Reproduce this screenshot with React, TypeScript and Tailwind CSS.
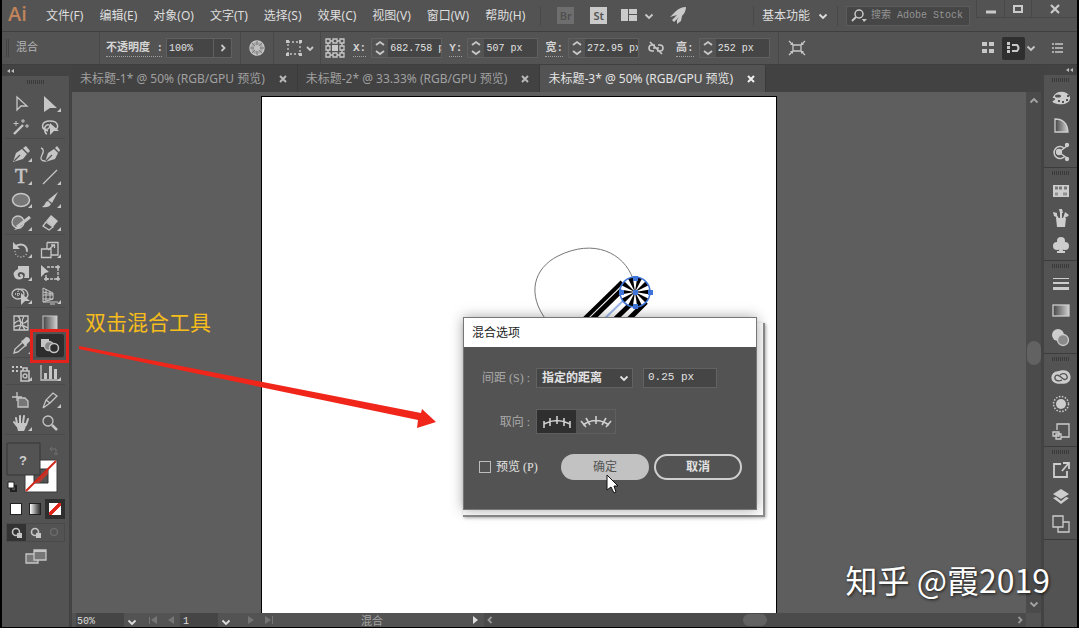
import type { ReactNode } from "react";

const ui = "font-['Noto_Sans','Noto_Sans_CJK_SC',sans-serif]";
const mono = "font-['Liberation_Mono','Noto_Sans_CJK_SC',monospace]";
const serif = "font-['Liberation_Serif','Noto_Sans_CJK_SC',serif]";

const menus = ["文件(F)", "编辑(E)", "对象(O)", "文字(T)", "选择(S)", "效果(C)", "视图(V)", "窗口(W)", "帮助(H)"];

const tabs = [
  { title: "未标题-1* @ 50% (RGB/GPU 预览)", active: false },
  { title: "未标题-2* @ 33.33% (RGB/GPU 预览)", active: false },
  { title: "未标题-3* @ 50% (RGB/GPU 预览)", active: true },
];

// Every icon is drawn around its own centre.
function Icon({ children, size = 24 }: { children: ReactNode; size?: number }) {
  const h = size / 2;
  return (
    <svg
      width={size}
      height={size}
      viewBox={`${-h} ${-h} ${size} ${size}`}
      className="shrink-0"
      fill="none"
      stroke="currentColor"
      strokeWidth="1.3"
      aria-hidden="true"
    >
      {children}
    </svg>
  );
}

function Chevron({ d = "M-3.5 -1.5L0 2L3.5 -1.5" }: { d?: string }) {
  return (
    <Icon size={12}>
      <path d={d} strokeWidth="1.8" />
    </Icon>
  );
}

function Solid({ d }: { d: string }) {
  return <path d={d} fill="currentColor" stroke="none" />;
}

const more = "M11 4V8H7Z";

type Tool = { name: string; icon: ReactNode; more?: boolean; active?: boolean };

const toolGroups: Tool[][] = [
  [
    { name: "选择工具", icon: <path d="M-4 -7L6 2H0L-4 6Z" /> },
    { name: "直接选择工具", more: true, icon: <Solid d="M-6 -8L7 4H0L-6 8Z" /> },
    {
      name: "魔棒工具",
      icon: (
        <>
          <path d="M-7 7L2 -2" strokeWidth="2.4" />
          <path d="M-5 -6V-1M-7.500 -3.500H-2.500M2 -8V-4M0 -6H4M6 -3V1M4 -1H8" strokeWidth="1" />
        </>
      ),
    },
    {
      name: "套索工具",
      icon: (
        <>
          <path d="M-2 4C-10 2 -9 -6 0 -6C9 -6 9 1 5 3M-5 0C-3 -4 2 -2 -1 1C-4 4 -6 2 -5 0Q-6 6 -3 7" strokeWidth="1.500" />
          <Solid d="M0 -4L9 4L4 4L0 8Z" />
        </>
      ),
    },
  ],
  [
    {
      name: "钢笔工具",
      more: true,
      icon: (
        <>
          <Solid d="M-8 8L-5 -1L1 -5L6 0L2 5Z M2 -6L5 -8L9 -3L7 -1Z" />
          <path d="M-7 7L-1 1" stroke="#535353" />
        </>
      ),
    },
    {
      name: "曲率工具",
      icon: (
        <>
          <Solid d="M-5 8L-2 -1L4 -5L8 -1L5 5Z M5 -6L7 -8L10 -4L9 -2Z" />
          <path d="M-4 7L2 1" stroke="#535353" />
          <path d="M-9 -6Q-5 -5 -8 1T-5 7" />
        </>
      ),
    },
    {
      name: "文字工具",
      more: true,
      icon: (
        <text x="0" y="6" textAnchor="middle" fill="currentColor" strokeWidth="0.6" className="font-['Liberation_Serif',serif] text-[20px]">
          T
        </text>
      ),
    },
    { name: "直线段工具", more: true, icon: <path d="M-7 7L7 -7" /> },
    { name: "椭圆工具", more: true, icon: <ellipse rx="8.500" ry="6.500" fill="#777" strokeWidth="1.500" /> },
    { name: "画笔工具", more: true, icon: <Solid d="M8 -8L2 3L-2 0ZM-2 1L1 4Q-1 8 -8 7Q-5 5 -4 2Z" /> },
    {
      name: "Shaper 工具",
      more: true,
      icon: (
        <>
          <circle cx="-3" cy="-1" r="6" fill="#777" />
          <path d="M-4 4L9 -6" strokeWidth="3" />
          <Solid d="M-2 2L1 5L-7 7Z" />
        </>
      ),
    },
    {
      name: "橡皮擦工具",
      more: true,
      icon: (
        <>
          <Solid d="M1 -8L8 -2L3 4L-4 -2Z" />
          <path d="M-4 -1L3 4L-1 7L-7 3Z" />
        </>
      ),
    },
  ],
  [
    {
      name: "旋转工具",
      more: true,
      icon: (
        <>
          <path d="M-6 -3C-1 -8 6 -5 6 1" strokeWidth="2" />
          <path d="M6 1C6 9 -6 9 -6 1" strokeDasharray="1 2" />
          <Solid d="M-8 -8V-1H-1Z" />
        </>
      ),
    },
    {
      name: "比例缩放工具",
      more: true,
      icon: <path d="M-3 -7.500H8V5H1M-3 -7.500V-1M-8.500 -1H1V7.500H-8.500ZM-2 0L4 -5M1 -5H4.500V-2" />,
    },
    {
      name: "宽度工具",
      more: true,
      icon: <Solid d="M-3 -7H8V5H3Q6 -1 -1 -1Q-4 0 -3 3Q-1 5 0 3Q-2 3 -1 1Q3 1 2 5Q-2 8 -6 5Q-10 -1 -3 -4Z" />,
    },
    {
      name: "自由变换工具",
      icon: (
        <>
          <path d="M-3 -6H8V6H-4V2" strokeDasharray="3 1" />
          <path d="M6 -6h4M8 -8v4M6 6h4M8 4v4M-6 6h4M-4 4v4" />
          <Solid d="M-9 -8L-1 -1L-5 0L-9 4Z" />
        </>
      ),
    },
    {
      name: "形状生成器工具",
      more: true,
      icon: (
        <>
          <ellipse cx="-3" cy="-2" rx="6" ry="5" />
          <path d="M-3 -6Q6 -9 7 -1Q6 3 2 3" />
          <path d="M-6 -2H0M-3 -5V1" strokeDasharray="1 1" />
          <Solid d="M0 -3L9 5L4 5L0 9Z" />
        </>
      ),
    },
    {
      name: "透视网格工具",
      more: true,
      icon: <path d="M-7 -8V6H8M-7 -8L3 -3V3L-7 6M-4 -7V5M0 -5V4M-7 -1H3M-7 -4L3 -2M-7 3H3M0 8H5" strokeWidth="1" />,
    },
  ],
  [
    {
      name: "网格工具",
      icon: <path d="M-7 -7H7V7H-7ZM-7 1Q-3 -4 0 -1T7 -3M-7 4Q0 0 7 5M-3 -7Q2 -1 -2 7M3 -7Q-1 0 4 7" />,
    },
    {
      name: "渐变工具",
      icon: <rect x="-7" y="-7" width="14" height="14" fill="url(#ramp)" strokeWidth="1" />,
    },
    {
      name: "吸管工具",
      more: true,
      icon: (
        <>
          <path d="M-7 7L-6 3L2 -4L5 -1L-3 6Z" />
          <Solid d="M0 -5L2 -6L5 -9Q9 -9 9 -5L6 -2L5 1Z" />
        </>
      ),
    },
    {
      name: "混合工具",
      active: true,
      icon: (
        <>
          <Solid d="M-9 -7H-1V1H-9Z" />
          <circle cx="-1" cy="0" r="4.500" fill="#888" />
          <circle cx="4" cy="2" r="4.500" fill="#2d2d2d" strokeWidth="1.500" />
        </>
      ),
    },
  ],
  [
    {
      name: "符号喷枪工具",
      more: true,
      icon: (
        <>
          <path d="M0 -2H8V8H0ZM2 -2V-5H6V-2" strokeWidth="1.500" />
          <circle cx="4" cy="3" r="2" />
          <Solid d="M-9 -7h2v2h-2zM-5 -7h2v2h-2zM-1 -7h2v2h-2zM-9 -3h2v2h-2zM-5 -3h2v2h-2z" />
        </>
      ),
    },
    {
      name: "柱形图工具",
      more: true,
      icon: (
        <>
          <path d="M-9 -8V7H9" />
          <Solid d="M-6 0h3v6h-3zM-1 -7h3v13h-3zM4 -4h3v10h-3z" />
        </>
      ),
    },
  ],
  [
    {
      name: "画板工具",
      icon: (
        <>
          <path d="M-4 -8V1M-9 -3H1" />
          <path d="M-3 -2H4L7 1V7H-3Z" fill="#777" />
        </>
      ),
    },
    {
      name: "切片工具",
      more: true,
      icon: <path d="M-7 8L-4 0L3 -7L7 -4L0 3L-7 8M-4 0L0 3" />,
    },
    {
      name: "抓手工具",
      more: true,
      icon: (
        <>
          <path d="M-4 1L-5 -5M-1 0V-7M2 0L3 -7M5 2L7 -4M-4 3L-7 -1" strokeWidth="2" strokeLinecap="round" />
          <Solid d="M-5 0H6L4 6L3 8H-3Z" />
        </>
      ),
    },
    {
      name: "缩放工具",
      icon: (
        <>
          <circle cx="-2" cy="-2" r="5" />
          <path d="M2 2L7 7" strokeWidth="2.500" />
        </>
      ),
    },
  ],
];

const dockGroups: Tool[][] = [
  [
    {
      name: "颜色",
      icon: (
        <>
          <Solid d="M-8 -1C-5 -8 6 -8 9 -1C10 6 0 8 -7 5C-11 3 -6 3 -6 1C-6 -1 -9 1 -8 -1Z" />
          <path d="M-3 3h2M1 4h2M5 2h2M6 -2h2" stroke="#535353" strokeWidth="2" />
          <ellipse cx="-3" cy="-2" rx="3" ry="1.500" fill="#535353" stroke="none" />
        </>
      ),
    },
    { name: "颜色参考", icon: <path d="M-6 -6Q6 -6 7 7H-6Z" fill="url(#ramp)" /> },
    {
      name: "颜色主题",
      icon: (
        <>
          <path d="M4 4A6 6 0 1 1 3 -4M-2 0L6 -6M-1 1L6 6" strokeWidth="1.500" />
          <circle cx="-2" cy="0" r="2.500" fill="currentColor" />
          <circle cx="6" cy="-7" r="1.500" fill="currentColor" />
          <circle cx="6" cy="7" r="1.500" fill="currentColor" />
        </>
      ),
    },
  ],
  [
    {
      name: "色板",
      icon: (
        <>
          <Solid d="M-8 -6H8V6H-8Z" />
          <path d="M-6 -3h3M-2 -3h3M3 -3h3" stroke="#777" strokeWidth="3" />
          <path d="M-6 3h3M2 3h4" stroke="#929292" strokeWidth="3" />
        </>
      ),
    },
    {
      name: "画笔",
      icon: (
        <>
          <path d="M-2 2L-6 -4M0 2V-6M2 2L5 -4" strokeWidth="2" />
          <Solid d="M-5 0H5L4 9H-4ZM-8 -6L-4 -5L-4 -1L-7 -2ZM-2 -9H1L2 -5H-1ZM4 -6L8 -3L6 -1L3 -2Z" />
        </>
      ),
    },
    {
      name: "符号",
      icon: (
        <>
          <circle cy="-4" r="4" fill="currentColor" stroke="none" />
          <circle cx="-4" cy="1" r="4" fill="currentColor" stroke="none" />
          <circle cx="4" cy="1" r="4" fill="currentColor" stroke="none" />
          <Solid d="M-1 -2H1L2 6H4V8H-4V6H-2Z" />
        </>
      ),
    },
  ],
  [
    { name: "描边", icon: <Solid d="M-8 -6h16v1h-16zM-8 -2h16v2h-16zM-8 3h16v3h-16z" /> },
    { name: "渐变", icon: <rect x="-8" y="-6" width="16" height="11" fill="url(#ramp)" /> },
    {
      name: "透明度",
      icon: (
        <>
          <circle cx="-3" cy="-3" r="6" fill="currentColor" stroke="none" />
          <circle cx="2" cy="2" r="5.500" fill="#8a8a8a" />
        </>
      ),
    },
  ],
  [
    {
      name: "库",
      icon: (
        <>
          <rect x="-9" y="-5" width="13" height="11" rx="5.500" fill="currentColor" />
          <rect x="-5" y="-6" width="14" height="12" rx="6" fill="currentColor" />
          <path d="M1 3C-3 5 -7 3 -6 0C-5 -3 -2 -2 1 1C4 4 7 2 6 -1C5 -4 1 -4 -1 -2" stroke="#535353" />
        </>
      ),
    },
    {
      name: "外观",
      icon: (
        <>
          <circle r="5" fill="currentColor" stroke="none" />
          <circle r="7.500" strokeDasharray="1.500 1.500" strokeWidth="1.500" />
        </>
      ),
    },
    { name: "图形样式", icon: <path d="M-4 -1V-7H8V6H0M-8 1H-2V5H-8ZM-5 3H0V8H-5Z" /> },
  ],
  [
    { name: "资源导出", icon: <path d="M0 -6H-7V7H6V1M1 1L7 -6M2 -7H8V-1" strokeWidth="1.800" /> },
    { name: "图层", icon: <Solid d="M0 -8L8 -3L0 2L-8 -3ZM-8 1L-5 0L0 4L5 0L8 1L0 7Z" /> },
    { name: "画板", icon: <path d="M-8 -8H2V3H-8ZM-3 3V8H8V-2H2" /> },
  ],
];

function Grip() {
  return <div className="mx-auto h-1 w-[18px] bg-[repeating-linear-gradient(90deg,#3a3a3a_0_1px,#535353_1px_2px)]" />;
}

function Rule() {
  return <div className="h-8 w-px shrink-0 bg-[#484848]" />;
}

function MenuBar() {
  return (
    <header className={`flex h-8 shrink-0 items-center border-b border-[#3f3f3f] text-[12px] text-[#dedede] ${ui}`}>
      <span className="w-9 pb-1 pl-[6px] font-['Open_Sans',sans-serif] text-[20px] leading-6 font-semibold text-[#c0835b]">Ai</span>
      <nav className="flex">
        {menus.map((m) => (
          <button key={m} className="px-2 whitespace-nowrap">
            {m}
          </button>
        ))}
      </nav>
      <div className="ml-[7px] h-5 w-px bg-[#484848]" />
      <button className="ml-4 size-[17px] bg-[#6e6e6e] text-[11px] leading-4 font-semibold text-[#505050]">Br</button>
      <button className="ml-4 size-[17px] bg-[#cacaca] text-[11px] leading-4 font-semibold text-[#535353]">St</button>
      <button className="ml-3 flex items-center gap-1 text-[#cacaca]" aria-label="排列文档">
        <Icon size={20}>
          <Solid d="M-8 -7H-1V5H-8ZM0 -7H8V-2H0ZM0 -1H8V5H0Z" />
        </Icon>
        <Chevron />
      </button>
      <button className="ml-3 text-[#cacaca]" aria-label="GPU 性能">
        <Icon size={22}>
          <Solid d="M8 -9Q8 -4 4 0L3 5L-1 8V4L1 1L-4 6L-6 4L-1 -1L-8 1L-3 -4Q2 -9 8 -9Z" />
        </Icon>
      </button>
      <div className="ml-auto h-5 w-px bg-[#484848]" />
      <button className="flex items-center gap-[7px] pr-1 pl-2">
        基本功能 <Chevron />
      </button>
      <div className="ml-1 h-5 w-px bg-[#484848]" />
      <label className={`ml-2 flex h-[20px] w-[124px] items-center border border-[#5c5c5c] bg-[#464646] text-[#c8c8c8] ${mono}`}>
        <Icon size={22}>
          <circle cx="1" cy="-2" r="4" strokeWidth="1.500" />
          <path d="M-2 1L-6 5" strokeWidth="2" />
          <Solid d="M4 3H9L6 6Z" />
        </Icon>
        <input
          aria-label="搜索 Adobe Stock"
          placeholder="搜索 Adobe Stock"
          className="w-0 flex-1 pl-[2px] text-[10px] outline-none placeholder:text-[#949494]"
        />
      </label>
      <div className="ml-[6px] flex h-[18px] items-center self-start border-b border-l border-[#484848] text-[#cacaca]">
        <button aria-label="最小化" className="w-[28px] border-r border-[#484848] pl-[5px]">
          <Icon size={18}>
            <path d="M-5 3H5" strokeWidth="3" />
          </Icon>
        </button>
        <button aria-label="还原" className="w-[27px] border-r border-[#484848] pl-1">
          <Icon size={18}>
            <path d="M-4 -3H4V3H-4Z" strokeWidth="2" />
          </Icon>
        </button>
        <button aria-label="关闭" className="flex w-[45px] justify-center">
          <Icon size={18}>
            <path d="M-4 -4L4 4M4 -4L-4 4" strokeWidth="2.200" />
          </Icon>
        </button>
      </div>
    </header>
  );
}

function NumberField({ label, id, value }: { label: string; id: string; value: string }) {
  return (
    <div className="flex items-center">
      <label htmlFor={id} className="mr-[5px] border-b border-dotted border-[#a0a0a0] text-[11px] leading-4 font-bold whitespace-nowrap text-[#d5d5d5]">
        {label}
      </label>
      <div className="flex h-[20px] w-[71px] border border-[#606060] bg-[#454545]">
        <span className="flex w-4 shrink-0 items-center bg-[#535353]">
          <Icon size={16}>
            <path d="M-4 -3L0 -6L4 -3M-4 3L0 6L4 3" strokeWidth="1.800" />
          </Icon>
        </span>
        <input id={id} defaultValue={value} className="w-0 flex-1 pl-[2px] text-[10px] text-[#e2e2e2] outline-none" />
      </div>
    </div>
  );
}

function ControlBar() {
  return (
    <div className={`flex h-[33px] shrink-0 items-center border-b border-[#3f3f3f] text-[#c8c8c8] ${mono}`}>
      <div className="ml-1 h-[18px] w-[3px] border-x border-[#444]" />
      <span className="w-[90px] pl-[7px] text-[11px] text-[#b4b4b4]">混合</span>
      <Rule />
      <label htmlFor="opacity" className="ml-[6px] w-[56px] border-b border-dotted border-[#a0a0a0] text-[11px] leading-4 font-bold whitespace-nowrap text-[#d5d5d5]">
        不透明度 :
      </label>
      <div className="mr-2 ml-1 flex h-[20px] w-[66px] border border-[#606060] bg-[#454545]">
        <input id="opacity" defaultValue="100%" className="w-0 flex-1 pl-[2px] text-[10px] text-[#e2e2e2] outline-none" />
        <button aria-label="不透明度选项" className="flex w-[18px] items-center justify-center border-l border-[#606060]">
          <Chevron d="M-1.500 -3L1.500 0L-1.500 3" />
        </button>
      </div>
      <Rule />
      <button aria-label="重新着色图稿" className="px-1">
        <Icon>
          <circle r="7" fill="#a8a8a8" strokeWidth="1.500" />
          <path d="M-7 0H7M0 -7V7M-5 -5L5 5M5 -5L-5 5" stroke="#7b7b7b" strokeWidth="1" />
          <circle r="3" fill="#c0c0c0" stroke="none" />
        </Icon>
      </button>
      <Rule />
      <button aria-label="对齐" className="flex w-[46px] items-center pl-2">
        <Icon>
          <path d="M-6 -6H6V6H-6Z" strokeDasharray="2 2" />
          <Solid d="M-8 -8h3v3h-3zM5 -8h3v3h-3zM-8 5h3v3h-3zM5 5h3v3h-3z" />
        </Icon>
        <Chevron d="M-5 -1L-2 2L1 -1" />
      </button>
      <Rule />
      <button aria-label="参考点" className="mr-2 ml-1">
        <Icon size={20}>
          <path d="M-9 -9h4v4h-4zM-2 -9h4v4h-4zM5 -9h4v4h-4zM-9 -2h4v4h-4zM5 -2h4v4h-4zM-9 5h4v4h-4zM-2 5h4v4h-4zM5 5h4v4h-4zM-5 -7h3M2 -7h3M-5 7h3M2 7h3M-7 -5v3M-7 2v3M7 -5v3M7 2v3" />
          <Solid d="M-3 -3h6v6h-6z" />
        </Icon>
      </button>
      <div className="flex gap-[7px]">
        <NumberField id="x" label="X:" value="682.758 px" />
        <NumberField id="y" label="Y:" value="507 px" />
        <NumberField id="w" label="宽:" value="272.95 px" />
      </div>
      <button aria-label="约束宽度和高度比例" className="mr-[8px] ml-[5px]">
        <Icon>
          <path d="M-1 -3H-4A3 3 0 0 0 -4 3H-2M1 3H4A3 3 0 0 0 4 -3H2M-3 0H3M-6 -6L6 6" strokeWidth="1.600" />
        </Icon>
      </button>
      <div className="mr-[8px]">
        <NumberField id="h" label="高:" value="252 px" />
      </div>
      <Rule />
      <button aria-label="隔离选中的对象" className="ml-[6px]">
        <Icon>
          <path d="M-4 -3H4V3H-4ZM-8 -7L-4 -3M8 -7L4 -3M-8 7L-4 3M8 7L4 3" />
          <Solid d="M-7 -3H-4V-6ZM7 -3H4V-6ZM-7 3H-4V6ZM7 3H4V6Z" />
        </Icon>
      </button>
      <div className="mr-[10px] ml-auto flex items-center">
        <button aria-label="对齐像素" className="mr-[2px]">
          <Icon>
            <Solid d="M-6 -6h5v4h-5zM1 -6h5v4h-5zM-6 1h5v4h-5zM1 1h5v4h-5z" />
          </Icon>
        </button>
        <button aria-label="贴紧选项" className="flex h-[23px] w-[23px] items-center rounded-[2px] bg-[#2f2f2f]">
          <Icon size={22}>
            <Solid d="M-6 -6h3v3h-3zM-6 -2h3v3h-3zM-6 2h3v3h-3z" />
            <path d="M-1 -3H4Q7 0 4 3H-1" strokeWidth="2" />
          </Icon>
        </button>
        <Chevron />
        <button aria-label="面板菜单" className="ml-[10px]">
          <Icon size={20}>
            <path d="M-5 -4H-3M-5 0H-3M-5 4H-3M-2 -4H6M-2 0H6M-2 4H6" strokeWidth="1.500" />
          </Icon>
        </button>
      </div>
    </div>
  );
}

function ToolPanel() {
  return (
    <aside className="w-[70px] shrink-0 overflow-hidden border-r-[3px] border-[#434343]">
      <button aria-label="折叠工具" className="flex h-[11px] w-full items-center bg-[#434343] text-[#bdbdbd]">
        <Icon size={16}>
          <Solid d="M0 -2V2L-3 0ZM4 -2V2L1 0Z" />
        </Icon>
      </button>
      <div className="h-4 pt-1">
        <Grip />
      </div>
      <div className="px-1 text-[#c6c6c6]">
        {toolGroups.map((group, i) => (
          <div key={i} className="mb-[3px] grid grid-cols-2 border-b border-[#494949]">
            {group.map((t) => (
              <button key={t.name} aria-label={t.name} title={t.name} className="flex h-[23px] items-center justify-center">
                <span className={t.active ? "flex h-[23px] w-7 items-center justify-center rounded-[2px] bg-[#2d2d2d]" : "flex"}>
                  <Icon>
                    {t.icon}
                    {t.more && <Solid d={more} />}
                  </Icon>
                </span>
              </button>
            ))}
          </div>
        ))}

        <svg width="58" height="54" viewBox="0 0 58 54" className="mt-[7px]" role="img" aria-label="填色和描边">
          <path d="M19 18H51V50H19Z" fill="#fff" stroke="#3c3c3c" />
          <path d="M28 27H42V41H28Z" fill="#535353" stroke="#333" />
          <path d="M28 41L42 27V32L33 41Z" fill="#b83a2e" />
          <path d="M20 49L50 19" stroke="#d0271c" strokeWidth="2" />
          <path d="M1 1H34V33H1Z" fill="#535353" stroke="#363636" />
          <text x="17" y="23" textAnchor="middle" fill="#d0d0d0" className="font-['Liberation_Sans',sans-serif] text-[13px] font-bold">
            ?
          </text>
          <path d="M44 7H50V13M44 7L46 5M44 7L46 9M50 13L48 11M50 13L52 11" stroke="#707070" fill="none" />
          <path d="M5 44H10V49H5Z" fill="none" stroke="#222" strokeWidth="2" />
          <path d="M2 40H8V46H2Z" fill="#fff" stroke="#222" />
        </svg>

        <div className="mt-[3px] grid grid-cols-3">
          <button aria-label="颜色" className="flex h-[20px] items-center justify-center">
            <span className="size-3 border border-[#222] bg-white" />
          </button>
          <button aria-label="渐变" className="flex h-[20px] items-center justify-center">
            <span className="size-3 border border-[#222] bg-linear-to-r from-white to-[#333]" />
          </button>
          <button aria-label="无" className="flex h-[20px] items-center justify-center bg-[#2f2f2f]">
            <span className="size-3 bg-[linear-gradient(135deg,#fff_38%,#e0261c_38%_62%,#fff_62%)]" />
          </button>
        </div>
        <div className="mt-1 grid grid-cols-3 border border-[#4a4a4a] text-[#c6c6c6]">
          {["正常绘图", "背面绘图", "内部绘图"].map((name, i) => (
            <button
              key={name}
              aria-label={name}
              className={`flex h-[17px] items-center justify-center ${i === 0 ? "bg-[#333]" : ""} ${i === 2 ? "text-[#6a6a6a]" : ""}`}
            >
              <Icon size={16}>
                <circle cx="-1" cy="-1" r="3.500" strokeWidth="1.600" />
                {i < 2 && <Solid d="M0 0H5V5H0Z" />}
              </Icon>
            </button>
          ))}
        </div>
        <button aria-label="更改屏幕模式" className="mt-[2px] flex w-full justify-center">
          <Icon>
            <path d="M-10 -2H2V7H-10Z" fill="#777" />
            <path d="M-2 -6H10V4H-2Z" fill="#777" />
            <path d="M-2 -5H10" strokeWidth="2" />
          </Icon>
        </button>
      </div>
    </aside>
  );
}

function Dock() {
  return (
    <aside className="w-[36px] shrink-0 overflow-hidden border-l-[3px] border-[#434343]">
      <button aria-label="展开面板" className="flex h-[10px] w-full items-center justify-end bg-[#434343] text-[#bdbdbd]">
        <Icon size={16}>
          <Solid d="M0 -2V2L-3 0ZM4 -2V2L1 0Z" />
        </Icon>
      </button>
      {dockGroups.map((group, i) => (
        <div key={i} className="border-b border-[#3c3c3c] pt-[3px] pb-[2px] text-[#cdcdcd]">
          <Grip />
          <div className="mt-[2px]">
            {group.map((p) => (
              <button key={p.name} aria-label={p.name} title={p.name} className="flex h-[27px] w-full items-center justify-center">
                <Icon>{p.icon}</Icon>
              </button>
            ))}
          </div>
        </div>
      ))}
    </aside>
  );
}

function Artwork() {
  const spokes = Array.from({ length: 10 }, (_, i) => i * 36);
  return (
    <svg width="514" height="516" viewBox="262 97 514 516" fill="none" aria-hidden="true">
      <path d="M547 321C526 294 534 268 558 256C594 238 624 253 633 279" stroke="#777" />
      <path d="M624 280L577 326H625L648 303Z" fill="#fff" />
      <path d="M622 282L578 325" stroke="#000" strokeWidth="4" />
      <path d="M627 285L585 326M638 297L606 328M646 302L622 326" stroke="#000" strokeWidth="5" />
      <path d="M631 293L597 326" stroke="#9cb8ea" strokeWidth="2" />
      <circle cx="635" cy="292" r="15" fill="#fff" />
      {spokes.map((a) => (
        <path key={a} d="M635 292L632.5 277H637.5Z" fill="#000" transform={`rotate(${a + 18} 635 292)`} />
      ))}
      <circle cx="635" cy="292" r="15" stroke="#3f74d8" strokeWidth="1.500" />
      <path d="M633 276h5v5h-5zM619 290h5v5h-5zM648 290h5v5h-5zM633 304h5v5h-5zM633 290h5v5h-5z" fill="#3f74d8" />
    </svg>
  );
}

function BlendDialog() {
  return (
    <section
      role="dialog"
      aria-label="混合选项"
      className={`absolute top-[225px] left-[391px] w-[294px] border border-[#777] bg-[#535353] text-[12px] text-[#e2e2e2] shadow-[0_0_12px_rgba(0,0,0,0.35)] ${serif}`}
    >
      <h2 className="flex h-[29px] items-center bg-white pl-2 text-[12px] text-[#222]">混合选项</h2>
      <div className="mt-[21px] flex h-[20px] items-center">
        <label htmlFor="spacing" className="w-[72px] pr-[6px] text-right text-[12px] whitespace-nowrap text-[#a9a9a9]">
          间距 (S) :
        </label>
        <div className="relative flex">
          <select
            id="spacing"
            className="h-[20px] w-[97px] appearance-none border border-[#626262] bg-[#454545] pl-[5px] text-[12px] leading-[18px] font-bold outline-none"
          >
            <option>指定的距离</option>
          </select>
          <span className="pointer-events-none absolute top-1 right-[3px]">
            <Chevron />
          </span>
        </div>
        <input
          aria-label="距离"
          defaultValue="0.25 px"
          className={`ml-[10px] h-[20px] w-[74px] border border-[#626262] bg-[#454545] pb-[2px] pl-1 text-[11px] outline-none ${mono}`}
        />
      </div>
      <div className="mt-[21px] flex h-[25px] items-center">
        <span className="w-[72px] pr-[6px] text-right text-[12px] text-[#a9a9a9]">取向 :</span>
        <div className="flex border border-[#5f5f5f]">
          <button aria-label="对齐页面" className="flex h-[23px] w-[39px] items-center justify-center bg-[#2f2f2f]">
            <svg width="30" height="20" fill="none" stroke="#cfcfcf" strokeWidth="1.600">
              <path d="M2 12Q15 5 28 12M2 9V16M8 6V14M15 4V12M22 6V14M28 9V16" />
            </svg>
          </button>
          <button aria-label="对齐路径" className="flex h-[23px] w-[39px] items-center justify-center">
            <svg width="32" height="20" fill="none" stroke="#cfcfcf" strokeWidth="1.600">
              <path d="M3 13Q16 4 29 13M1 9L6 15M6 6L10 13M16 4V12M26 6L22 13M31 9L26 15" />
            </svg>
          </button>
        </div>
      </div>
      <div className="mt-5 mb-[29px] flex h-[26px] items-center">
        <label className="ml-[15px] flex w-[82px] items-center gap-[5px] text-[12px] whitespace-nowrap">
          <input type="checkbox" className="size-3 appearance-none border border-[#bdbdbd]" />
          预览 (P)
        </label>
        <button className="h-[26px] w-[88px] rounded-full bg-[#c2c2c2] text-[12px] text-[#555]">确定</button>
        <button className="ml-[5px] h-[26px] w-[88px] rounded-full border-2 border-[#cfcfcf] text-[12px] font-bold">取消</button>
      </div>
    </section>
  );
}

function StatusBar() {
  return (
    <footer className={`flex h-[14px] shrink-0 items-center overflow-hidden text-[10px] leading-[14px] text-[#dedede] ${mono}`}>
      <label className="ml-1 flex w-[68px] items-center">
        <input aria-label="缩放" defaultValue="50%" className="h-[14px] w-[48px] bg-[#454545] pt-1 pl-px outline-none" />
        <span className="pt-1 pl-[2px]">
          <Chevron />
        </span>
      </label>
      <span className="flex w-[36px] items-center text-[#757575]">
        <Icon size={18}>
          <Solid d="M-4 -3h1v7h-1zM4 -4V4L-2 0Z" />
        </Icon>
        <Icon size={18}>
          <Solid d="M3 -4V4L-3 0Z" />
        </Icon>
      </span>
      <label className="flex w-[62px] items-center">
        <input aria-label="画板导航" defaultValue="1" className="h-[14px] w-[38px] bg-[#454545] pt-1 pl-[3px] outline-none" />
        <span className="pt-1 pl-[2px]">
          <Chevron />
        </span>
      </label>
      <span className="flex w-[36px] items-center text-[#757575]">
        <Icon size={18}>
          <Solid d="M-3 -4V4L3 0Z" />
        </Icon>
        <Icon size={18}>
          <Solid d="M-4 -4V4L2 0ZM3 -4h1v8h-1z" />
        </Icon>
      </span>
      <span className="w-[188px] pt-1 text-center text-[11px] text-[#a5a5a5]">混合</span>
      <Icon size={18}>
        <Solid d="M-2 -4V4L3 0Z" />
      </Icon>
      <div className="flex h-full flex-1 items-center justify-between bg-[#4b4b4b] text-[#999]">
        <Chevron d="M1.500 -3L-1.500 0L1.500 3" />
        <span className="h-3 w-6 rounded-full bg-[#626262]" />
        <Chevron d="M-1.500 -3L1.500 0L-1.500 3" />
      </div>
      <div className="w-[15px] shrink-0" />
    </footer>
  );
}

export default function App() {
  return (
    <div className="relative flex h-screen flex-col overflow-hidden border-x-2 border-b border-black bg-[#535353]">
      <svg width="0" height="0" className="absolute" aria-hidden="true">
        <linearGradient id="ramp">
          <stop offset="0" stopColor="#444" />
          <stop offset="1" stopColor="#d0d0d0" />
        </linearGradient>
      </svg>
      <MenuBar />
      <ControlBar />

      <div className="flex min-h-0 flex-1">
        <ToolPanel />

        <main className="flex min-w-0 flex-1 flex-col">
          <div className={`flex h-[27px] shrink-0 bg-[#424242] text-[12px] ${ui}`}>
            {tabs.map((t) => (
              <div
                key={t.title}
                className={`flex items-center gap-[13px] border-r border-[#3a3a3a] pr-[9px] pl-2 ${t.active ? "bg-[#535353] text-[#e4e4e4]" : "text-[#a0a0a0]"}`}
              >
                <button className="whitespace-nowrap">{t.title}</button>
                <button aria-label="关闭文档">
                  <Icon size={10}>
                    <path d="M-3 -3L3 3M3 -3L-3 3" stroke={t.active ? "#f0f0f0" : "#b8b8b8"} strokeWidth="2" />
                  </Icon>
                </button>
              </div>
            ))}
          </div>

          <div className="flex min-h-0 flex-1">
            <div className="relative min-w-0 flex-1 bg-[#5e5e5e]">
              <div className="absolute top-1 bottom-0 left-[189px] w-[516px] overflow-hidden border border-b-0 border-black bg-white">
                <Artwork />
              </div>

              <p className="absolute top-[215px] left-[13px] font-['Noto_Sans_CJK_SC',sans-serif] text-[21px] leading-7 whitespace-nowrap text-[#f6bd1b]">
                双击混合工具
              </p>
              <svg width="362" height="90" viewBox="78 343 362 90" className="absolute top-[251px] left-[6px]" aria-hidden="true">
                <path d="M79 346L421 413L422 409L436 422L417 428L418 420L79 349Z" fill="#f0261b" />
              </svg>

              <div className="absolute top-[231px] left-[391px] h-[194px] w-[302px] border-r-2 border-b-2 border-[#8d8d8d] shadow-[1px_1px_3px_rgba(0,0,0,0.3)]" />
              <BlendDialog />
              <svg width="14" height="20" className="absolute top-[382px] left-[534px]" aria-hidden="true">
                <path d="M1 1V16L5 13L8 19L10 18L8 12H12Z" fill="#fff" stroke="#111" />
              </svg>
            </div>
            <div className="flex w-[15px] shrink-0 flex-col items-center justify-between bg-[#4b4b4b] py-[3px] text-[#a5a5a5]">
              <Chevron d="M-3.500 1.500L0 -2L3.500 1.500" />
              <span className="h-6 w-[14px] rounded-full bg-[#626262]" />
              <Chevron />
            </div>
          </div>
          <StatusBar />
        </main>

        <Dock />
      </div>

      <div className="pointer-events-none absolute top-[329px] left-[28px] h-[34px] w-[39px] border-[3px] border-[#e3231b]" />
      <p className="pointer-events-none absolute right-[27px] bottom-[28px] font-['Noto_Sans_CJK_SC',sans-serif] text-[32px] leading-10 whitespace-nowrap text-white [text-shadow:1px_1px_3px_rgba(0,0,0,0.75)]">
        知乎 @霞2019
      </p>
    </div>
  );
}
